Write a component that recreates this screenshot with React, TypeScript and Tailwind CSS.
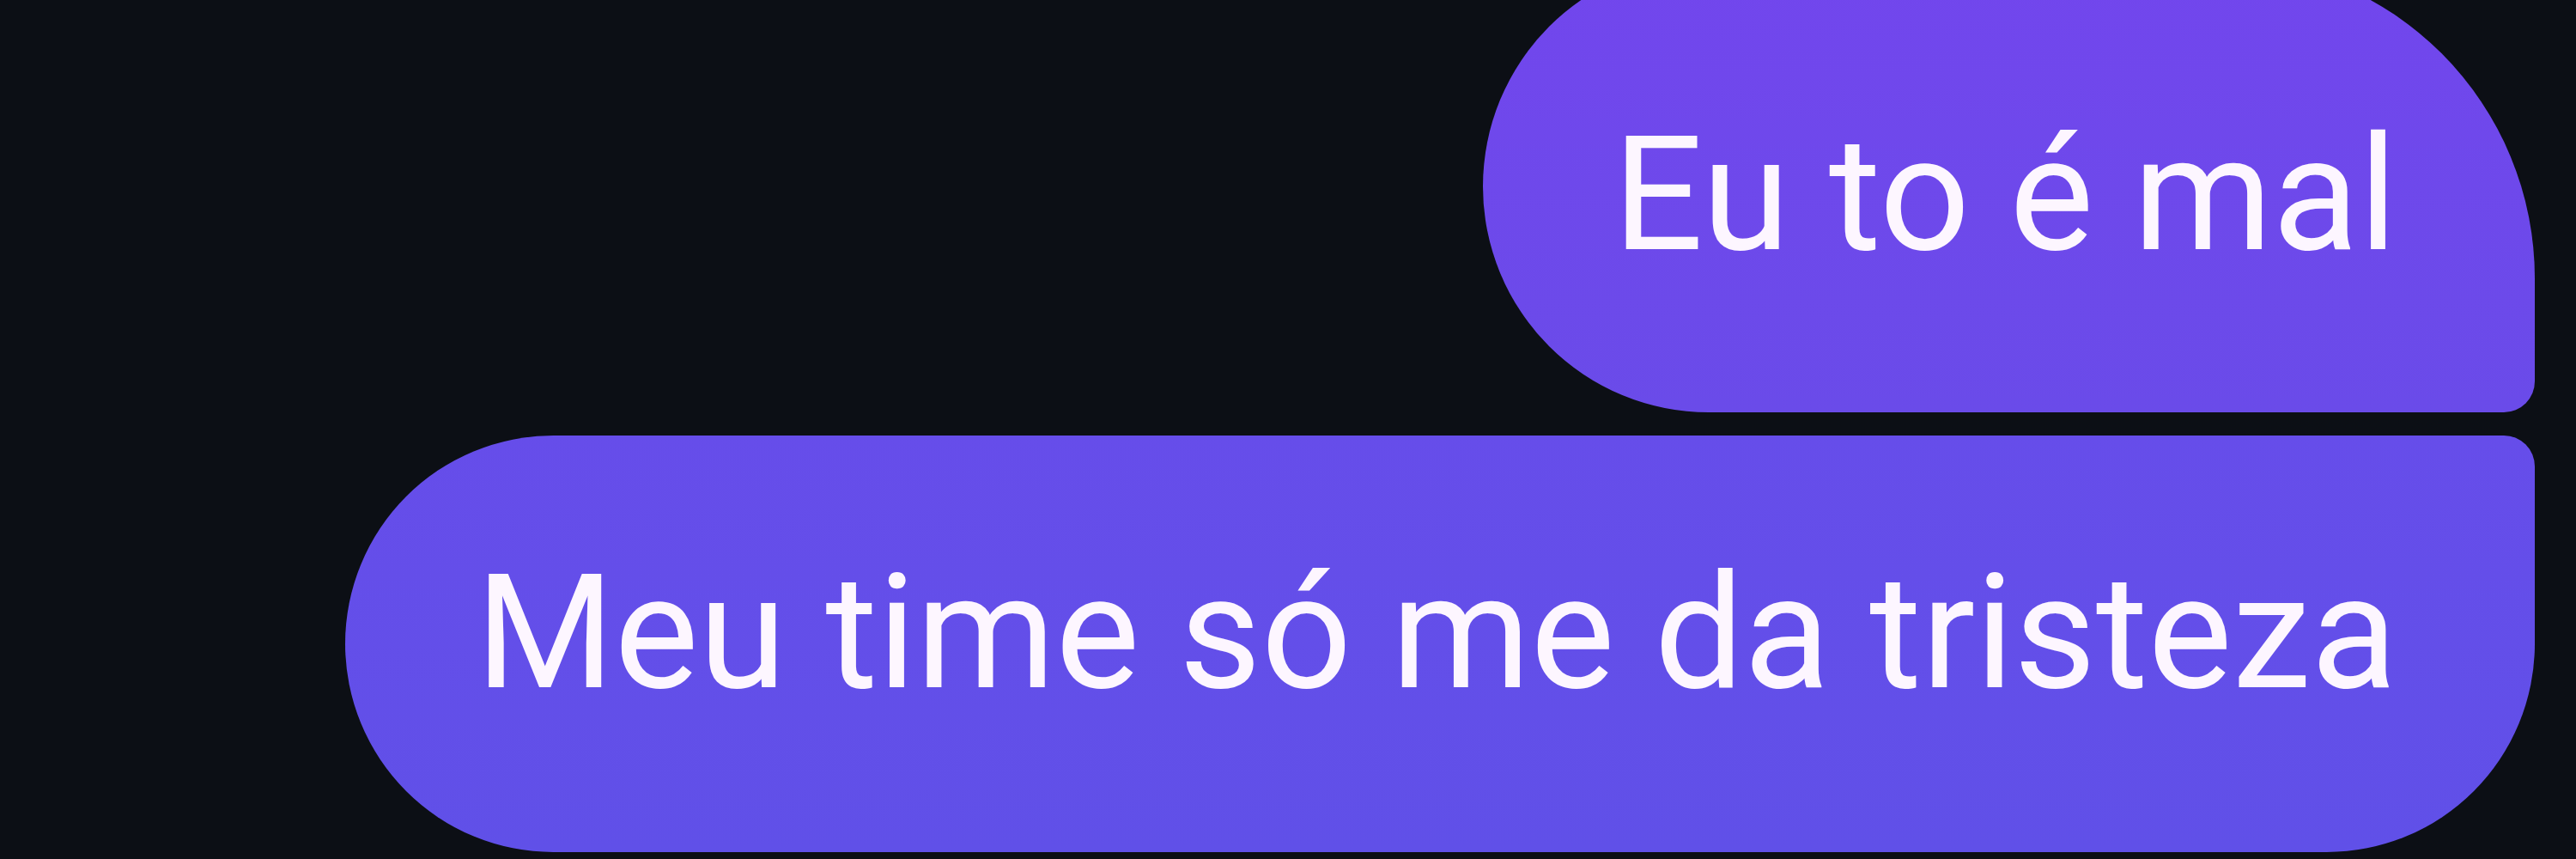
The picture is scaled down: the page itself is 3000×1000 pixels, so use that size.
const messages = [
  {
    text: "Eu to é mal",
    bubble:
      "h-[526px] pt-[18px] rounded-l-[263px] rounded-tr-[370px] rounded-br-[36px] bg-linear-to-b from-[#7246ed] to-[#6a4be9]",
  },
  {
    text: "Meu time só me da tristeza",
    bubble:
      "h-[485px] pb-[26px] rounded-l-[243px] rounded-tr-[36px] rounded-br-[243px] bg-linear-to-b from-[#664dea] to-[#6050e8]",
  },
];

export default function App() {
  return (
    <div className="w-[3000px] h-[1000px] overflow-hidden bg-[#0c0f15] font-['Roboto','Liberation_Sans',sans-serif]">
      {/* chat thread, sent messages aligned right */}
      <div className="-mt-[46px] flex flex-col items-end gap-[27px] pr-[48px]">
        {messages.map((m) => (
          <div
            key={m.text}
            className={`flex items-center pl-[152px] pr-[160px] text-[185px] font-normal leading-none text-[#fdf6ff] whitespace-nowrap ${m.bubble}`}
          >
            {m.text}
          </div>
        ))}
      </div>
    </div>
  );
}
